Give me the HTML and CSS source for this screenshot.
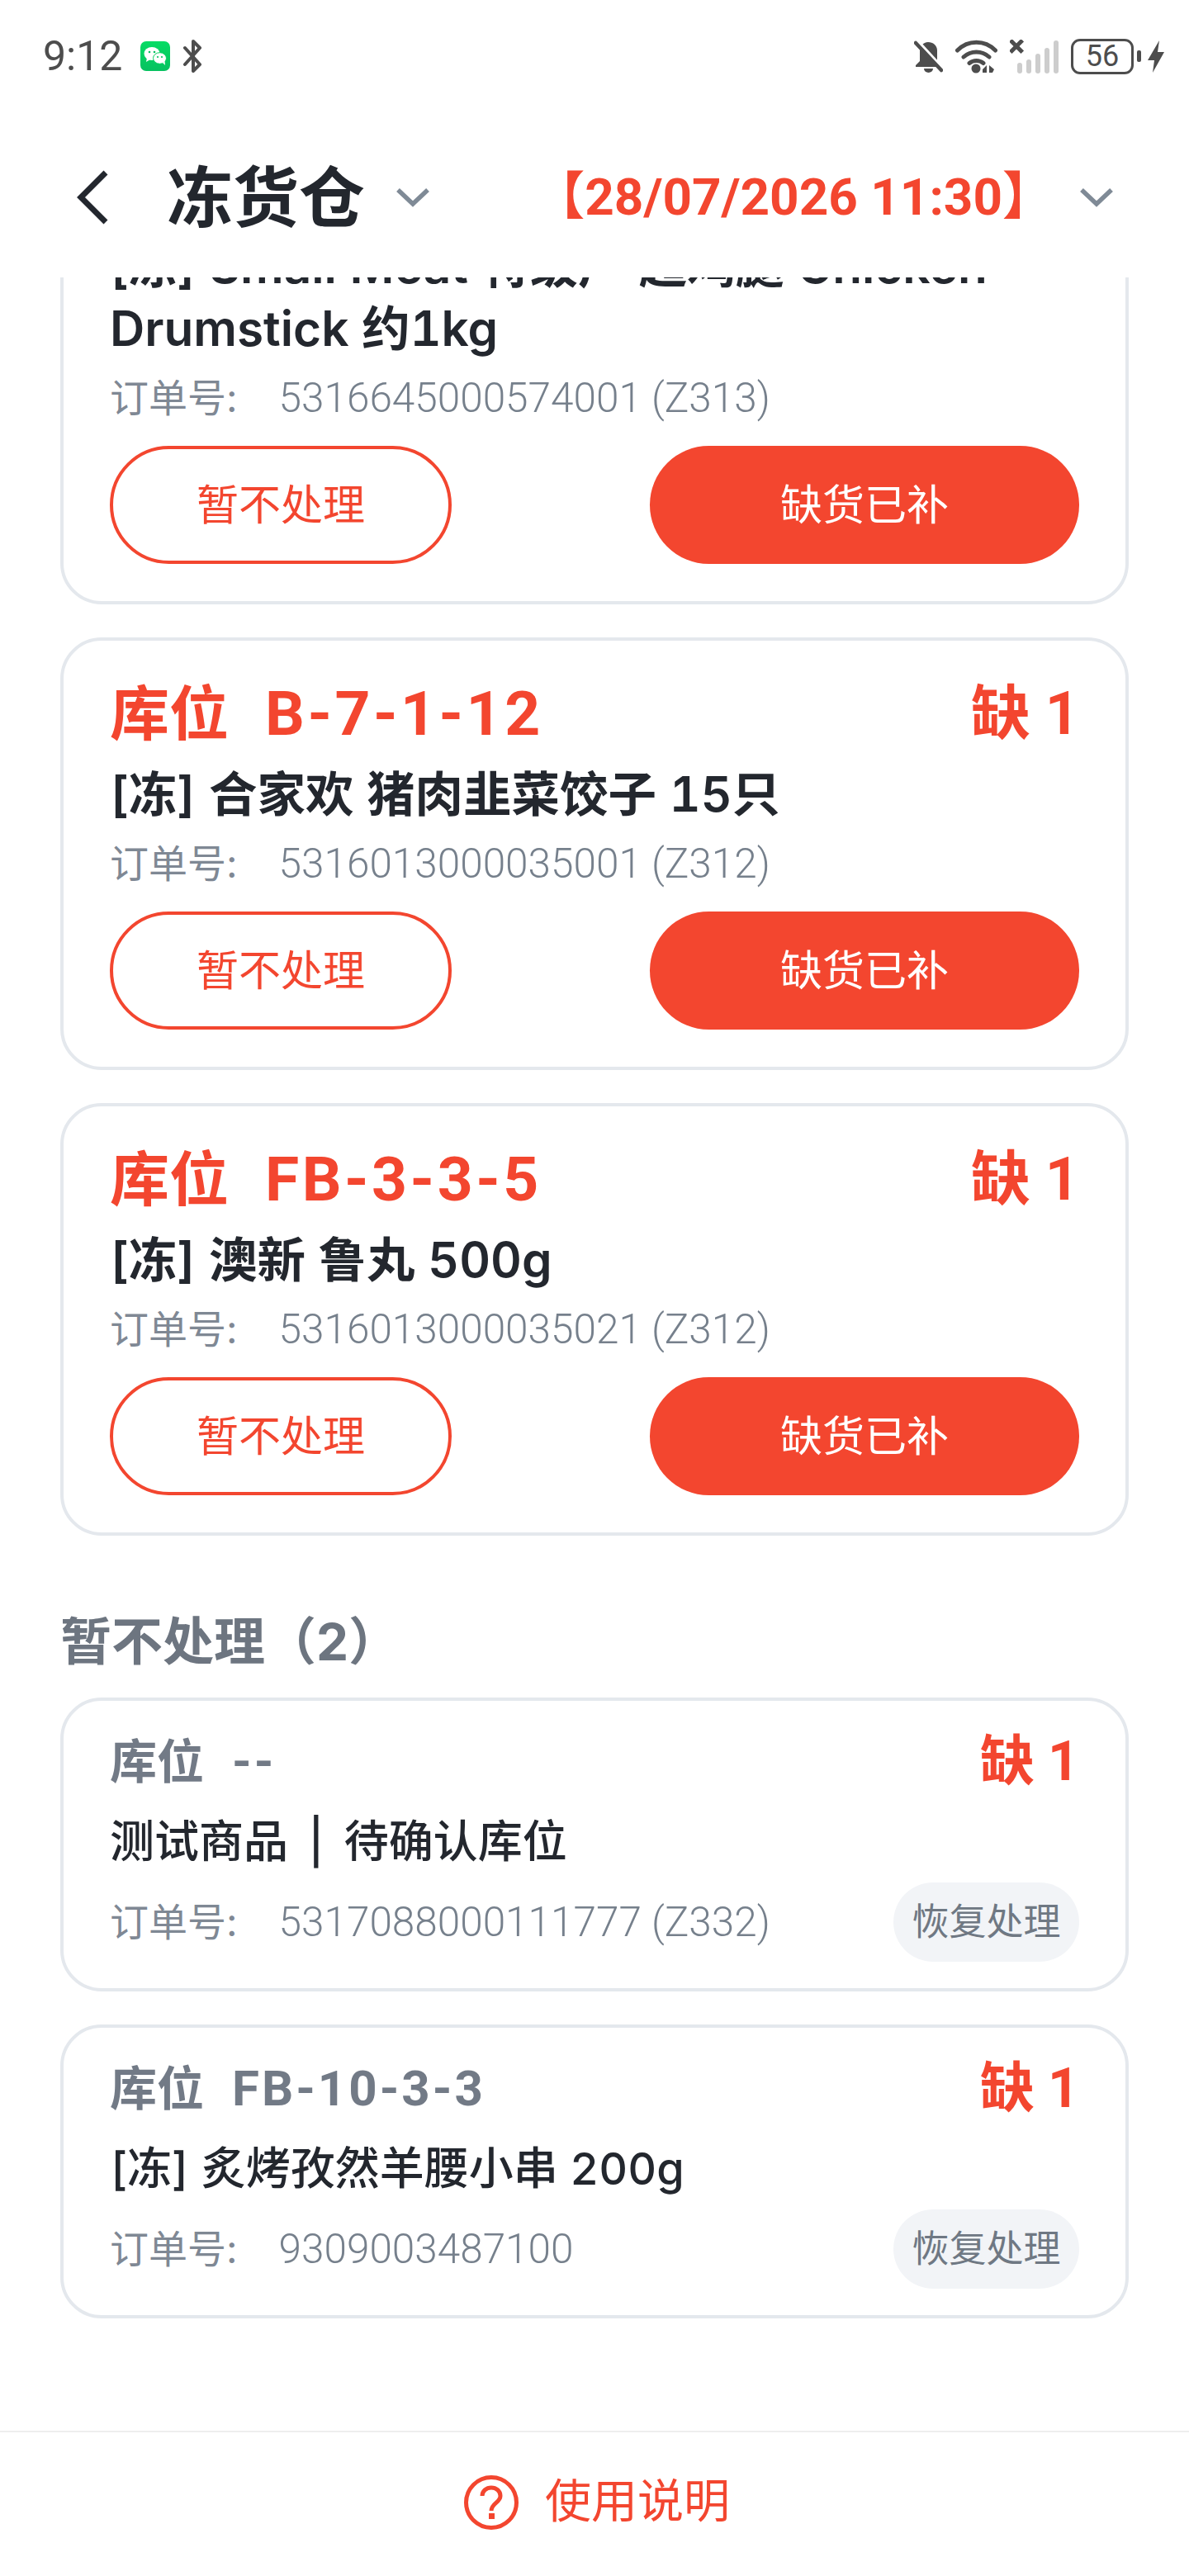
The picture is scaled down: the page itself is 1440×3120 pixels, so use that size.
FILE: index.html
```html
<!DOCTYPE html>
<html lang="zh-CN">
<head>
    <meta charset="UTF-8">
    <meta name="viewport" content="width=device-width, initial-scale=1.0">
    <title>冻货仓</title>
    <link rel="stylesheet" href="styles.css">
</head>
<body>
    <!-- Status bar -->
    <div class="status-bar">
        <div class="status-left">
            <span class="clock">9:12</span>
            <svg class="icon-wechat" viewBox="0 0 36 36">
                <defs>
                    <linearGradient id="wechatGreen" x1="0" y1="0" x2="0" y2="1">
                        <stop offset="0" stop-color="#06dc64"/>
                        <stop offset="1" stop-color="#07c160"/>
                    </linearGradient>
                </defs>
                <rect width="36" height="36" rx="7" fill="url(#wechatGreen)"/>
                <ellipse cx="14" cy="15" rx="9.5" ry="8" fill="#fff"/>
                <path d="M8 20l-1 5 5-3z" fill="#fff"/>
                <ellipse cx="23.5" cy="20.5" rx="8" ry="6.8" fill="#fff" stroke="#07cf62" stroke-width="1"/>
                <path d="M27 26l3 3-.5-5z" fill="#fff"/>
                <circle cx="11" cy="13" r="1.3" fill="#07c160"/>
                <circle cx="17" cy="13" r="1.3" fill="#07c160"/>
                <circle cx="21" cy="19" r="1.1" fill="#07c160"/>
                <circle cx="26" cy="19" r="1.1" fill="#07c160"/>
            </svg>
            <svg class="icon-bluetooth" viewBox="0 0 24 40">
                <path d="M3 10l18 20-8 8V2l8 8L3 30" fill="none" stroke="#4d4d4d" stroke-width="4" stroke-linejoin="round" stroke-linecap="round"/>
            </svg>
        </div>
        <div class="status-right">
            <svg class="icon-bell" viewBox="0 0 35 39">
                <path d="M17 2C11 2 7 7 7 13v12l-5 5v2h29v-2l-3-3V12C28 6 23 2 17 2z" fill="#4d4d4d"/>
                <path d="M12 34a5.500 5 0 0 0 11 0z" fill="#4d4d4d"/>
                <path d="M4 0L36 35" stroke="#fff" stroke-width="3.500"/>
                <path d="M2 3l31 33" stroke="#4d4d4d" stroke-width="4.500" stroke-linecap="round"/>
            </svg>
            <svg class="icon-wifi" viewBox="0 0 51 41">
                <path d="M2.500 13c13-13 33-13 46 0M10 21c9-8 22-8 31 0M17 28.500c5-4 12-4 17 0" fill="none" stroke="#4d4d4d" stroke-width="5" stroke-linecap="round"/>
                <circle cx="25" cy="35" r="5.500" fill="#4d4d4d"/>
                <path d="M33 36l5-5v9h-5zM41 31l6 5-2 4h-4z" fill="#4d4d4d"/>
            </svg>
            <svg class="icon-signal" viewBox="0 0 59 41">
                <path d="M2.500 2.500l11 11M13.500 2.500l-11 11" stroke="#4d4d4d" stroke-width="5" stroke-linecap="square"/>
                <rect x="9" y="28" width="6" height="13" rx="3" fill="#cdcdcd"/>
                <rect x="20" y="24" width="6" height="17" rx="3" fill="#cdcdcd"/>
                <rect x="31" y="17" width="6" height="24" rx="3" fill="#cdcdcd"/>
                <rect x="42" y="10" width="6" height="31" rx="3" fill="#cdcdcd"/>
                <rect x="53" y="1" width="6" height="40" rx="3" fill="#cdcdcd"/>
            </svg>
            <div class="battery">56</div>
            <span class="battery-nub"></span>
            <svg class="icon-bolt" viewBox="0 0 20 39">
                <path d="M14 0L0 24h8L6 39l14-25h-8z" fill="#4d4d4d"/>
            </svg>
        </div>
    </div>

    <!-- Header -->
    <div class="header">
        <svg class="icon-back" viewBox="0 0 38 66">
            <path d="M35 3L5 33l30 30" fill="none" stroke="#23272e" stroke-width="7"/>
        </svg>
        <h1 class="page-title">冻货仓</h1>
        <svg class="icon-caret" viewBox="0 0 40 24">
            <path d="M2 3l18 17L38 3" fill="none" stroke="#7f8a96" stroke-width="5.5"/>
        </svg>
        <div class="batch-time">【28/07/2026 11:30】</div>
        <svg class="icon-caret" viewBox="0 0 40 24">
            <path d="M2 3l18 17L38 3" fill="none" stroke="#7f8a96" stroke-width="5.5"/>
        </svg>
    </div>

    <!-- List -->
    <div class="list">
        <div class="list-inner">
            <div class="card">
                <div class="product">[冻] Small Meat 特级广 超鸡腿 Chicken Drumstick 约1kg</div>
                <div class="order">订单号:<span class="order-no">5316645000574001 (Z313)</span></div>
                <div class="actions">
                    <button class="btn-skip">暂不处理</button>
                    <button class="btn-done">缺货已补</button>
                </div>
            </div>

            <div class="card">
                <div class="card-top">
                    <div class="location"><span>库位</span><span class="location-code">B-7-1-12</span></div>
                    <div class="shortage">缺 1</div>
                </div>
                <div class="product">[冻] 合家欢 猪肉韭菜饺子 15只</div>
                <div class="order">订单号:<span class="order-no">5316013000035001 (Z312)</span></div>
                <div class="actions">
                    <button class="btn-skip">暂不处理</button>
                    <button class="btn-done">缺货已补</button>
                </div>
            </div>

            <div class="card">
                <div class="card-top">
                    <div class="location"><span>库位</span><span class="location-code">FB-3-3-5</span></div>
                    <div class="shortage">缺 1</div>
                </div>
                <div class="product">[冻] 澳新 鲁丸 500g</div>
                <div class="order">订单号:<span class="order-no">5316013000035021 (Z312)</span></div>
                <div class="actions">
                    <button class="btn-skip">暂不处理</button>
                    <button class="btn-done">缺货已补</button>
                </div>
            </div>

            <h2 class="section-title">暂不处理（2）</h2>

            <div class="card card-muted">
                <div class="card-top">
                    <div class="location"><span>库位</span><span class="location-code">--</span></div>
                    <div class="shortage">缺 1</div>
                </div>
                <div class="product">测试商品 <span class="product-sep">|</span> 待确认库位</div>
                <div class="card-foot">
                    <div class="order">订单号:<span class="order-no">5317088000111777 (Z332)</span></div>
                    <button class="btn-restore">恢复处理</button>
                </div>
            </div>

            <div class="card card-muted">
                <div class="card-top">
                    <div class="location"><span>库位</span><span class="location-code">FB-10-3-3</span></div>
                    <div class="shortage">缺 1</div>
                </div>
                <div class="product">[冻] 炙烤孜然羊腰小串 200g</div>
                <div class="card-foot">
                    <div class="order">订单号:<span class="order-no">9309003487100</span></div>
                    <button class="btn-restore">恢复处理</button>
                </div>
            </div>
        </div>
    </div>

    <!-- Footer -->
    <div class="footer">
        <svg class="icon-help" viewBox="0 0 66 66">
            <circle cx="33" cy="33" r="30.5" fill="none" stroke="#f3462f" stroke-width="5"/>
            <path d="M22 25c0-6 5-10 11-10s11 4 11 10c0 8-11 9-11 18" fill="none" stroke="#f3462f" stroke-width="5"/>
            <rect x="30" y="46" width="7" height="7" fill="#f3462f"/>
        </svg>
        <span class="footer-text">使用说明</span>
    </div>
</body>
</html>
```

FILE: styles.css
```css
body {
    font-family: Inter, "Noto Sans CJK SC", sans-serif;
    margin: 0;
    padding: 0;
    background-color: #fff;
    color: #23272e;
    height: 100vh;
    display: flex;
    flex-direction: column;
    overflow: hidden;
}

/* Status bar */
.status-bar {
    height: 140px;
    flex-shrink: 0;
    box-sizing: border-box;
    padding: 0 30px 4px 52px;
    display: flex;
    justify-content: space-between;
    align-items: center;
}

.status-left,
.status-right {
    display: flex;
    align-items: center;
}

.clock {
    font-family: Roboto, sans-serif;
    font-size: 50px;
    color: #4d4d4d;
    margin-right: 22px;
}

.icon-wechat {
    width: 36px;
    height: 36px;
    margin-right: 15px;
}

.icon-bluetooth {
    width: 24px;
    height: 40px;
}

.icon-bell {
    width: 35px;
    height: 39px;
    margin-right: 15px;
}

.icon-wifi {
    width: 51px;
    height: 41px;
    margin-right: 15px;
}

.icon-signal {
    width: 59px;
    height: 41px;
    margin-right: 15px;
}

.battery {
    width: 76px;
    height: 43px;
    box-sizing: border-box;
    border: 3px solid #4d4d4d;
    border-radius: 11px;
    font-family: Roboto, sans-serif;
    font-size: 36px;
    line-height: 37px;
    text-align: center;
    color: #4d4d4d;
    margin-right: 4px;
}

.battery-nub {
    width: 5px;
    height: 14px;
    border-radius: 2px;
    background: #4d4d4d;
    margin-right: 8px;
}

.icon-bolt {
    width: 20px;
    height: 39px;
}

/* Header */
.header {
    height: 196px;
    flex-shrink: 0;
    box-sizing: border-box;
    padding: 2px 92px 0 93px;
    display: flex;
    align-items: center;
}

.icon-back {
    width: 38px;
    height: 66px;
    margin-right: 71px;
}

.page-title {
    margin: 0 38px 0 0;
    font-size: 80px;
    font-weight: 700;
    line-height: 100px;
}

.icon-caret {
    width: 40px;
    height: 24px;
    flex-shrink: 0;
}

.batch-time {
    margin-left: auto;
    margin-right: 32px;
    font-family: Roboto, "Noto Sans CJK SC", sans-serif;
    color: #f3462f;
    font-size: 62px;
    font-weight: 700;
    line-height: 80px;
    white-space: nowrap;
}

/* List */
.list {
    flex: 1;
    min-height: 0;
    overflow: hidden;
}

.list-inner {
    margin: -114px 73px 0;
    display: flex;
    flex-direction: column;
    gap: 40px;
}

.card {
    background: #fff;
    border: 4px solid #e4e8ed;
    border-radius: 50px;
    padding: 44px 56px 45px;
}

.card-top {
    display: flex;
    justify-content: space-between;
    align-items: center;
    height: 90px;
    font-family: Roboto, "Noto Sans CJK SC", sans-serif;
    color: #f3462f;
    font-weight: 700;
}

.location {
    font-size: 72px;
    line-height: 86px;
}

.location-code {
    margin-left: 44px;
    font-size: 75px;
    letter-spacing: 3.5px;
}

.shortage {
    font-size: 72px;
    line-height: 86px;
}

.product {
    margin-top: 14px;
    font-size: 58.5px;
    font-weight: 600;
    line-height: 76px;
    font-variant-numeric: tabular-nums;
}

.order {
    margin-top: 13px;
    font-size: 47px;
    line-height: 66px;
    color: #7f8894;
}

.order-no {
    font-family: Roboto, "Noto Sans CJK SC", sans-serif;
    font-size: 49.5px;
    font-weight: 300;
    margin-left: 50px;
    color: #76808c;
}

.actions {
    display: flex;
    justify-content: space-between;
    margin-top: 25px;
}

.actions button {
    height: 143px;
    padding: 0 0 8px;
    border-radius: 72px;
    font-family: inherit;
    font-size: 51px;
    cursor: pointer;
}

.btn-skip {
    width: 414px;
    background: #fff;
    border: 4px solid #f3462f;
    color: #f3462f;
}

.btn-done {
    width: 520px;
    background: #f3462f;
    border: none;
    color: #fff;
}

.section-title {
    margin: 49px 0 -13px;
    font-size: 62px;
    font-weight: 700;
    line-height: 80px;
    color: #6d7580;
}

/* Cards in the "on hold" section */
.card-muted {
    padding: 34px 56px 32px;
}

.card-muted .card-top {
    height: 80px;
}

.card-muted .location {
    font-size: 57px;
    line-height: 76px;
    color: #727a86;
}

.card-muted .location-code {
    margin-left: 34px;
    font-size: 60px;
    letter-spacing: 3px;
}

.card-muted .shortage {
    font-size: 66px;
    line-height: 76px;
}

.card-muted .product {
    margin-top: 19px;
    font-size: 54px;
    font-weight: 500;
}

.product-sep {
    margin: 0 10px;
}

.card-foot {
    display: flex;
    justify-content: space-between;
    align-items: center;
    margin-top: 11px;
}

.card-foot .order {
    margin-top: 0;
}

.btn-restore {
    width: 225px;
    height: 96px;
    padding: 0 0 8px;
    border: none;
    border-radius: 48px;
    background: #f2f4f7;
    color: #6f7883;
    font-family: inherit;
    font-size: 45px;
    cursor: pointer;
}

/* Footer */
.footer {
    height: 176px;
    flex-shrink: 0;
    box-sizing: border-box;
    border-top: 2px solid #eeeeee;
    display: flex;
    justify-content: center;
    align-items: center;
    gap: 32px;
    padding: 0 0 4px 6px;
}

.icon-help {
    width: 66px;
    height: 66px;
}

.footer-text {
    font-size: 56px;
    line-height: 70px;
    margin-bottom: 4px;
    color: #f3462f;
}
```
